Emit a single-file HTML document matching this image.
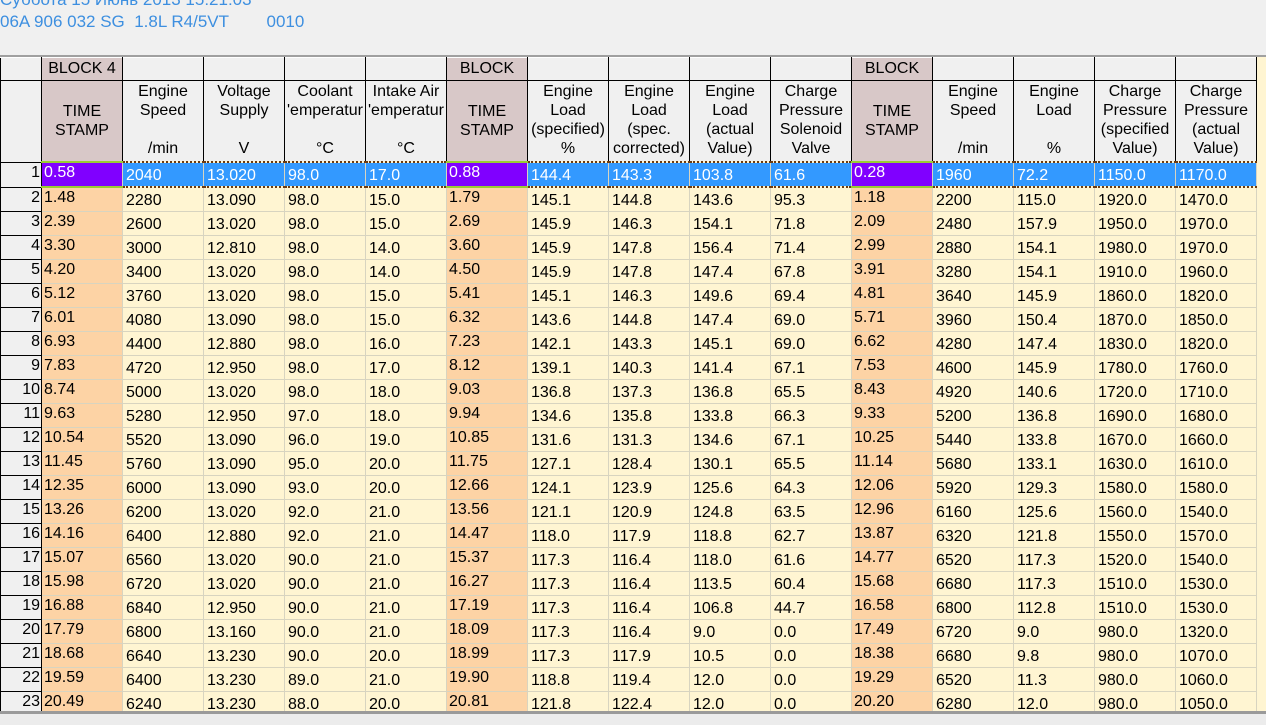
<!DOCTYPE html>
<html><head><meta charset="utf-8"><style>
body{margin:0;width:1266px;height:725px;background:#f0f0f0;overflow:hidden;font-family:"Liberation Sans",Arial,sans-serif;position:relative}
.t1{position:absolute;left:0;top:-10px;color:#3d8fe0;font-size:17px}
.t2{position:absolute;left:0;top:12px;color:#3d8fe0;font-size:17px;white-space:pre}
.wrap{position:absolute;left:0;top:55px;width:1266px;height:656px;overflow:hidden;background:#fff5d2;border-top:2px solid #a0a0a0}
table{border-collapse:collapse;table-layout:fixed;font-size:16px;color:#000}
td{padding:0;overflow:hidden;white-space:nowrap}
.b td{height:22px;background:#f0f0f0;border:1px solid #000;border-top:1px solid #fff;text-align:center}
.b td.ts{background:#d8c8c8}
.h td{height:79px;background:#f0f0f0;border:1px solid #000;text-align:center;vertical-align:top;line-height:19px;padding-top:1px}
.h td.ts{background:#d8c8c8;vertical-align:middle;padding-top:0}
.h td.n{border-top:1px solid #000}
.d td{height:23px;border:1px solid #d8d4c0;background:#fff5d2;padding-left:3px;vertical-align:bottom;line-height:20px}
.d td.ts{background:#fdd3a5;vertical-align:top;line-height:19px;padding-left:2px}
.d td.n{background:#f0f0f0;text-align:right;padding:0 1px 0 0;border:1px solid #000;border-top:1px solid #fff;vertical-align:top;line-height:20px}
.s td{background:#3399ff;color:#fff;border-top:2px dotted #6b3a10;border-bottom:2px dotted #6b3a10}
.s td.ts{background:#8000ff;color:#fff;border-top:2px solid #9c3;border-bottom:2px solid #9c3}
.s td.n{background:#f0f0f0;color:#000;border-top:1px solid #fff;border-bottom:1px solid #000}
</style></head><body>
<div class="t1">Суббота 15 Июнь 2013 15:21:03</div>
<div class="t2">06A 906 032 SG  1.8L R4/5VT        0010</div>
<div class="wrap"><table>
<colgroup><col style="width:41px"><col style="width:81px"><col style="width:81px"><col style="width:81px"><col style="width:81px"><col style="width:81px"><col style="width:81px"><col style="width:81px"><col style="width:81px"><col style="width:81px"><col style="width:81px"><col style="width:81px"><col style="width:81px"><col style="width:81px"><col style="width:81px"><col style="width:81px"></colgroup>
<tr class="b"><td></td><td class="ts">BLOCK 4</td><td></td><td></td><td></td><td></td><td class="ts">BLOCK</td><td></td><td></td><td></td><td></td><td class="ts">BLOCK</td><td></td><td></td><td></td><td></td></tr>
<tr class="h"><td class="n"></td><td class="ts">TIME<br>STAMP</td><td>Engine<br>Speed<br><br>/min</td><td>Voltage<br>Supply<br><br>V</td><td>Coolant<br>'emperatur<br><br>°C</td><td>Intake Air<br>'emperatur<br><br>°C</td><td class="ts">TIME<br>STAMP</td><td>Engine<br>Load<br>(specified)<br>%</td><td>Engine<br>Load<br>(spec.<br>corrected)</td><td>Engine<br>Load<br>(actual<br>Value)</td><td>Charge<br>Pressure<br>Solenoid<br>Valve</td><td class="ts">TIME<br>STAMP</td><td>Engine<br>Speed<br><br>/min</td><td>Engine<br>Load<br><br>%</td><td>Charge<br>Pressure<br>(specified<br>Value)</td><td>Charge<br>Pressure<br>(actual<br>Value)</td></tr>
<tr class="d s"><td class="n">1</td><td class="ts">0.58</td><td>2040</td><td>13.020</td><td>98.0</td><td>17.0</td><td class="ts">0.88</td><td>144.4</td><td>143.3</td><td>103.8</td><td>61.6</td><td class="ts">0.28</td><td>1960</td><td>72.2</td><td>1150.0</td><td>1170.0</td></tr>
<tr class="d"><td class="n">2</td><td class="ts">1.48</td><td>2280</td><td>13.090</td><td>98.0</td><td>15.0</td><td class="ts">1.79</td><td>145.1</td><td>144.8</td><td>143.6</td><td>95.3</td><td class="ts">1.18</td><td>2200</td><td>115.0</td><td>1920.0</td><td>1470.0</td></tr>
<tr class="d"><td class="n">3</td><td class="ts">2.39</td><td>2600</td><td>13.020</td><td>98.0</td><td>15.0</td><td class="ts">2.69</td><td>145.9</td><td>146.3</td><td>154.1</td><td>71.8</td><td class="ts">2.09</td><td>2480</td><td>157.9</td><td>1950.0</td><td>1970.0</td></tr>
<tr class="d"><td class="n">4</td><td class="ts">3.30</td><td>3000</td><td>12.810</td><td>98.0</td><td>14.0</td><td class="ts">3.60</td><td>145.9</td><td>147.8</td><td>156.4</td><td>71.4</td><td class="ts">2.99</td><td>2880</td><td>154.1</td><td>1980.0</td><td>1970.0</td></tr>
<tr class="d"><td class="n">5</td><td class="ts">4.20</td><td>3400</td><td>13.020</td><td>98.0</td><td>14.0</td><td class="ts">4.50</td><td>145.9</td><td>147.8</td><td>147.4</td><td>67.8</td><td class="ts">3.91</td><td>3280</td><td>154.1</td><td>1910.0</td><td>1960.0</td></tr>
<tr class="d"><td class="n">6</td><td class="ts">5.12</td><td>3760</td><td>13.020</td><td>98.0</td><td>15.0</td><td class="ts">5.41</td><td>145.1</td><td>146.3</td><td>149.6</td><td>69.4</td><td class="ts">4.81</td><td>3640</td><td>145.9</td><td>1860.0</td><td>1820.0</td></tr>
<tr class="d"><td class="n">7</td><td class="ts">6.01</td><td>4080</td><td>13.090</td><td>98.0</td><td>15.0</td><td class="ts">6.32</td><td>143.6</td><td>144.8</td><td>147.4</td><td>69.0</td><td class="ts">5.71</td><td>3960</td><td>150.4</td><td>1870.0</td><td>1850.0</td></tr>
<tr class="d"><td class="n">8</td><td class="ts">6.93</td><td>4400</td><td>12.880</td><td>98.0</td><td>16.0</td><td class="ts">7.23</td><td>142.1</td><td>143.3</td><td>145.1</td><td>69.0</td><td class="ts">6.62</td><td>4280</td><td>147.4</td><td>1830.0</td><td>1820.0</td></tr>
<tr class="d"><td class="n">9</td><td class="ts">7.83</td><td>4720</td><td>12.950</td><td>98.0</td><td>17.0</td><td class="ts">8.12</td><td>139.1</td><td>140.3</td><td>141.4</td><td>67.1</td><td class="ts">7.53</td><td>4600</td><td>145.9</td><td>1780.0</td><td>1760.0</td></tr>
<tr class="d"><td class="n">10</td><td class="ts">8.74</td><td>5000</td><td>13.020</td><td>98.0</td><td>18.0</td><td class="ts">9.03</td><td>136.8</td><td>137.3</td><td>136.8</td><td>65.5</td><td class="ts">8.43</td><td>4920</td><td>140.6</td><td>1720.0</td><td>1710.0</td></tr>
<tr class="d"><td class="n">11</td><td class="ts">9.63</td><td>5280</td><td>12.950</td><td>97.0</td><td>18.0</td><td class="ts">9.94</td><td>134.6</td><td>135.8</td><td>133.8</td><td>66.3</td><td class="ts">9.33</td><td>5200</td><td>136.8</td><td>1690.0</td><td>1680.0</td></tr>
<tr class="d"><td class="n">12</td><td class="ts">10.54</td><td>5520</td><td>13.090</td><td>96.0</td><td>19.0</td><td class="ts">10.85</td><td>131.6</td><td>131.3</td><td>134.6</td><td>67.1</td><td class="ts">10.25</td><td>5440</td><td>133.8</td><td>1670.0</td><td>1660.0</td></tr>
<tr class="d"><td class="n">13</td><td class="ts">11.45</td><td>5760</td><td>13.090</td><td>95.0</td><td>20.0</td><td class="ts">11.75</td><td>127.1</td><td>128.4</td><td>130.1</td><td>65.5</td><td class="ts">11.14</td><td>5680</td><td>133.1</td><td>1630.0</td><td>1610.0</td></tr>
<tr class="d"><td class="n">14</td><td class="ts">12.35</td><td>6000</td><td>13.090</td><td>93.0</td><td>20.0</td><td class="ts">12.66</td><td>124.1</td><td>123.9</td><td>125.6</td><td>64.3</td><td class="ts">12.06</td><td>5920</td><td>129.3</td><td>1580.0</td><td>1580.0</td></tr>
<tr class="d"><td class="n">15</td><td class="ts">13.26</td><td>6200</td><td>13.020</td><td>92.0</td><td>21.0</td><td class="ts">13.56</td><td>121.1</td><td>120.9</td><td>124.8</td><td>63.5</td><td class="ts">12.96</td><td>6160</td><td>125.6</td><td>1560.0</td><td>1540.0</td></tr>
<tr class="d"><td class="n">16</td><td class="ts">14.16</td><td>6400</td><td>12.880</td><td>92.0</td><td>21.0</td><td class="ts">14.47</td><td>118.0</td><td>117.9</td><td>118.8</td><td>62.7</td><td class="ts">13.87</td><td>6320</td><td>121.8</td><td>1550.0</td><td>1570.0</td></tr>
<tr class="d"><td class="n">17</td><td class="ts">15.07</td><td>6560</td><td>13.020</td><td>90.0</td><td>21.0</td><td class="ts">15.37</td><td>117.3</td><td>116.4</td><td>118.0</td><td>61.6</td><td class="ts">14.77</td><td>6520</td><td>117.3</td><td>1520.0</td><td>1540.0</td></tr>
<tr class="d"><td class="n">18</td><td class="ts">15.98</td><td>6720</td><td>13.020</td><td>90.0</td><td>21.0</td><td class="ts">16.27</td><td>117.3</td><td>116.4</td><td>113.5</td><td>60.4</td><td class="ts">15.68</td><td>6680</td><td>117.3</td><td>1510.0</td><td>1530.0</td></tr>
<tr class="d"><td class="n">19</td><td class="ts">16.88</td><td>6840</td><td>12.950</td><td>90.0</td><td>21.0</td><td class="ts">17.19</td><td>117.3</td><td>116.4</td><td>106.8</td><td>44.7</td><td class="ts">16.58</td><td>6800</td><td>112.8</td><td>1510.0</td><td>1530.0</td></tr>
<tr class="d"><td class="n">20</td><td class="ts">17.79</td><td>6800</td><td>13.160</td><td>90.0</td><td>21.0</td><td class="ts">18.09</td><td>117.3</td><td>116.4</td><td>9.0</td><td>0.0</td><td class="ts">17.49</td><td>6720</td><td>9.0</td><td>980.0</td><td>1320.0</td></tr>
<tr class="d"><td class="n">21</td><td class="ts">18.68</td><td>6640</td><td>13.230</td><td>90.0</td><td>20.0</td><td class="ts">18.99</td><td>117.3</td><td>117.9</td><td>10.5</td><td>0.0</td><td class="ts">18.38</td><td>6680</td><td>9.8</td><td>980.0</td><td>1070.0</td></tr>
<tr class="d"><td class="n">22</td><td class="ts">19.59</td><td>6400</td><td>13.230</td><td>89.0</td><td>21.0</td><td class="ts">19.90</td><td>118.8</td><td>119.4</td><td>12.0</td><td>0.0</td><td class="ts">19.29</td><td>6520</td><td>11.3</td><td>980.0</td><td>1060.0</td></tr>
<tr class="d"><td class="n">23</td><td class="ts">20.49</td><td>6240</td><td>13.230</td><td>88.0</td><td>20.0</td><td class="ts">20.81</td><td>121.8</td><td>122.4</td><td>12.0</td><td>0.0</td><td class="ts">20.20</td><td>6280</td><td>12.0</td><td>980.0</td><td>1050.0</td></tr>
</table></div>
<div style="position:absolute;left:0;top:711px;width:1266px;height:3px;background:#9a9a9a"></div>
<div style="position:absolute;left:0;top:714px;width:1266px;height:11px;background:#ececec"></div>
</body></html>
